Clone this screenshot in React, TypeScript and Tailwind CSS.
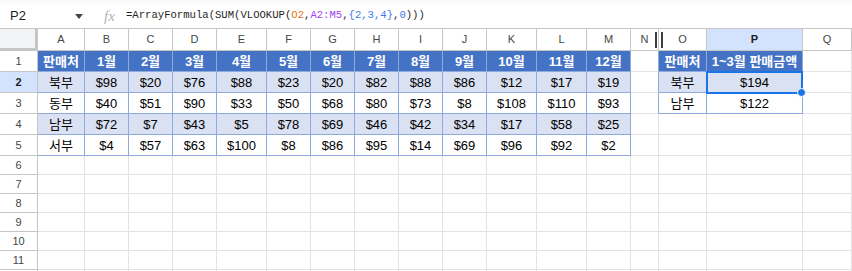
import React from "react";

const COLS = ["A", "B", "C", "D", "E", "F", "G", "H", "I", "J", "K", "L", "M", "N", "O", "P", "Q"];

const SALES: string[][] = [
  ["판매처", "1월", "2월", "3월", "4월", "5월", "6월", "7월", "8월", "9월", "10월", "11월", "12월"],
  ["북부", "$98", "$20", "$76", "$88", "$23", "$20", "$82", "$88", "$86", "$12", "$17", "$19"],
  ["동부", "$40", "$51", "$90", "$33", "$50", "$68", "$80", "$73", "$8", "$108", "$110", "$93"],
  ["남부", "$72", "$7", "$43", "$5", "$78", "$69", "$46", "$42", "$34", "$17", "$58", "$25"],
  ["서부", "$4", "$57", "$63", "$100", "$8", "$86", "$95", "$14", "$69", "$96", "$92", "$2"],
];

const SUMMARY: string[][] = [
  ["판매처", "1~3월 판매금액"],
  ["북부", "$194"],
  ["남부", "$122"],
];

type Kind = "head" | "band" | "plain" | "edge" | "empty";

const KIND: Record<Kind, string> = {
  head: "bg-[#4472c4] text-white font-bold border-r border-b border-[#8eaadb]",
  band: "bg-[#d9e1f2] text-black border-r border-b border-[#8eaadb]",
  plain: "bg-white text-black border-r border-b border-[#8eaadb]",
  edge: "bg-white border-r border-b border-r-[#8eaadb] border-b-[#e2e2e2]",
  empty: "bg-white border-r border-b border-[#e2e2e2]",
};

// row 12 only peeks in at the bottom edge, so it gets no label
const ROW_COUNT = 12;
const LAST_LABELLED = 11;

function cellInfo(r: number, c: number): { kind: Kind; text: string } {
  if (r <= 5 && c <= 12) {
    const kind: Kind = r === 1 ? "head" : r % 2 === 0 ? "band" : "plain";
    return { kind, text: SALES[r - 1][c] };
  }
  if (r <= 3 && (c === 14 || c === 15)) {
    const kind: Kind = r === 1 ? "head" : r === 2 ? "band" : "plain";
    return { kind, text: SUMMARY[r - 1][c - 14] };
  }
  if (r <= 3 && c === 13) return { kind: "edge", text: "" };
  return { kind: "empty", text: "" };
}

const FormulaBar = () => (
  <div className="flex flex-col">
    <div className="h-[4px] bg-[#f9fbfd]" />
    <div className="h-[25px] flex items-center border-b border-[#c4c7c5] bg-white">
      <span className="pl-[10px] w-[72px] text-[13px] text-[#1f1f1f] font-['Liberation_Sans',sans-serif]">P2</span>
      <svg width="8" height="5" viewBox="0 0 8 5" className="ml-[3px]">
        <path d="M0 0 L8 0 L4 5 Z" fill="#444746" />
      </svg>
      <span className="ml-[21px] w-[22px] text-[15px] italic text-[#b0b3b8] font-['Liberation_Serif',serif] leading-none">
        fx
      </span>
      <span className="text-[10.6px] text-[#1f1f1f] font-['Liberation_Mono',monospace] whitespace-pre">
        =ArrayFormula(SUM(VLOOKUP(
        <span className="text-[#e8710a]">O2</span>,
        <span className="text-[#a142f4]">A2:M5</span>,
        <span className="text-[#3b78e7]">{"{2,3,4}"}</span>,
        <span className="text-[#3b78e7]">0</span>)))
      </span>
    </div>
  </div>
);

export default function App() {
  const rows = Array.from({ length: ROW_COUNT }, (_, i) => i + 1);

  return (
    <div className="w-[852px] h-[271px] overflow-hidden bg-white font-['Liberation_Sans',sans-serif]">
      <FormulaBar />
      <div className="grid grid-cols-[38px_47px_44px_44px_44px_50px_44px_44px_44px_44px_44px_50px_50px_44px_28px_48px_96px_1fr] grid-rows-[22px_21px_21px_21px_21px_21px_19px_19px_19px_19px_19px_19px_19px]">
        {/* column headers */}
        <div className="bg-[#f1f3f4] border-r-[3px] border-b-[3px] border-[#c4c7c5]" />
        {COLS.map((col) => (
          <div
            key={col}
            className={
              col === "P"
                ? "relative flex items-center justify-center bg-[#d3e3fd] border-r border-b border-[#c4c7c5] text-[11px] font-bold text-[#1f1f1f]"
                : "relative flex items-center justify-center bg-white border-r border-b border-[#c4c7c5] text-[11px] text-[#444746]"
            }
          >
            {col}
            {col === "N" && (
              <>
                <div className="absolute left-[24px] top-[3px] w-[2px] h-[16px] bg-[#3c4043]" />
                <div className="absolute left-[30px] top-[3px] w-[2px] h-[16px] bg-[#3c4043] z-10" />
              </>
            )}
          </div>
        ))}

        {rows.map((r) => (
          <React.Fragment key={r}>
            <div
              className={
                r === 2
                  ? "flex items-center justify-center bg-[#d3e3fd] border-r border-b border-[#c4c7c5] text-[11px] font-bold text-[#1f1f1f]"
                  : "flex items-center justify-center bg-white border-r border-b border-[#c4c7c5] text-[11px] text-[#444746]"
              }
            >
              {r <= LAST_LABELLED ? r : ""}
            </div>
            {COLS.map((col, c) => {
              const { kind, text } = cellInfo(r, c);
              const selected = r === 2 && col === "P";
              return (
                <div
                  key={col}
                  className={`relative flex items-center justify-center pt-[1px] text-[13px] font-['Liberation_Sans','Noto_Sans_CJK_KR',sans-serif] whitespace-nowrap ${KIND[kind]}`}
                >
                  {text}
                  {selected && (
                    <div className="absolute -left-px -top-px w-[97px] h-[23px] border-2 border-[#1a73e8] z-10">
                      <div className="absolute -right-[5px] -bottom-[5px] w-[9px] h-[9px] rounded-full bg-[#1a73e8] border border-white" />
                    </div>
                  )}
                </div>
              );
            })}
          </React.Fragment>
        ))}
      </div>
    </div>
  );
}
